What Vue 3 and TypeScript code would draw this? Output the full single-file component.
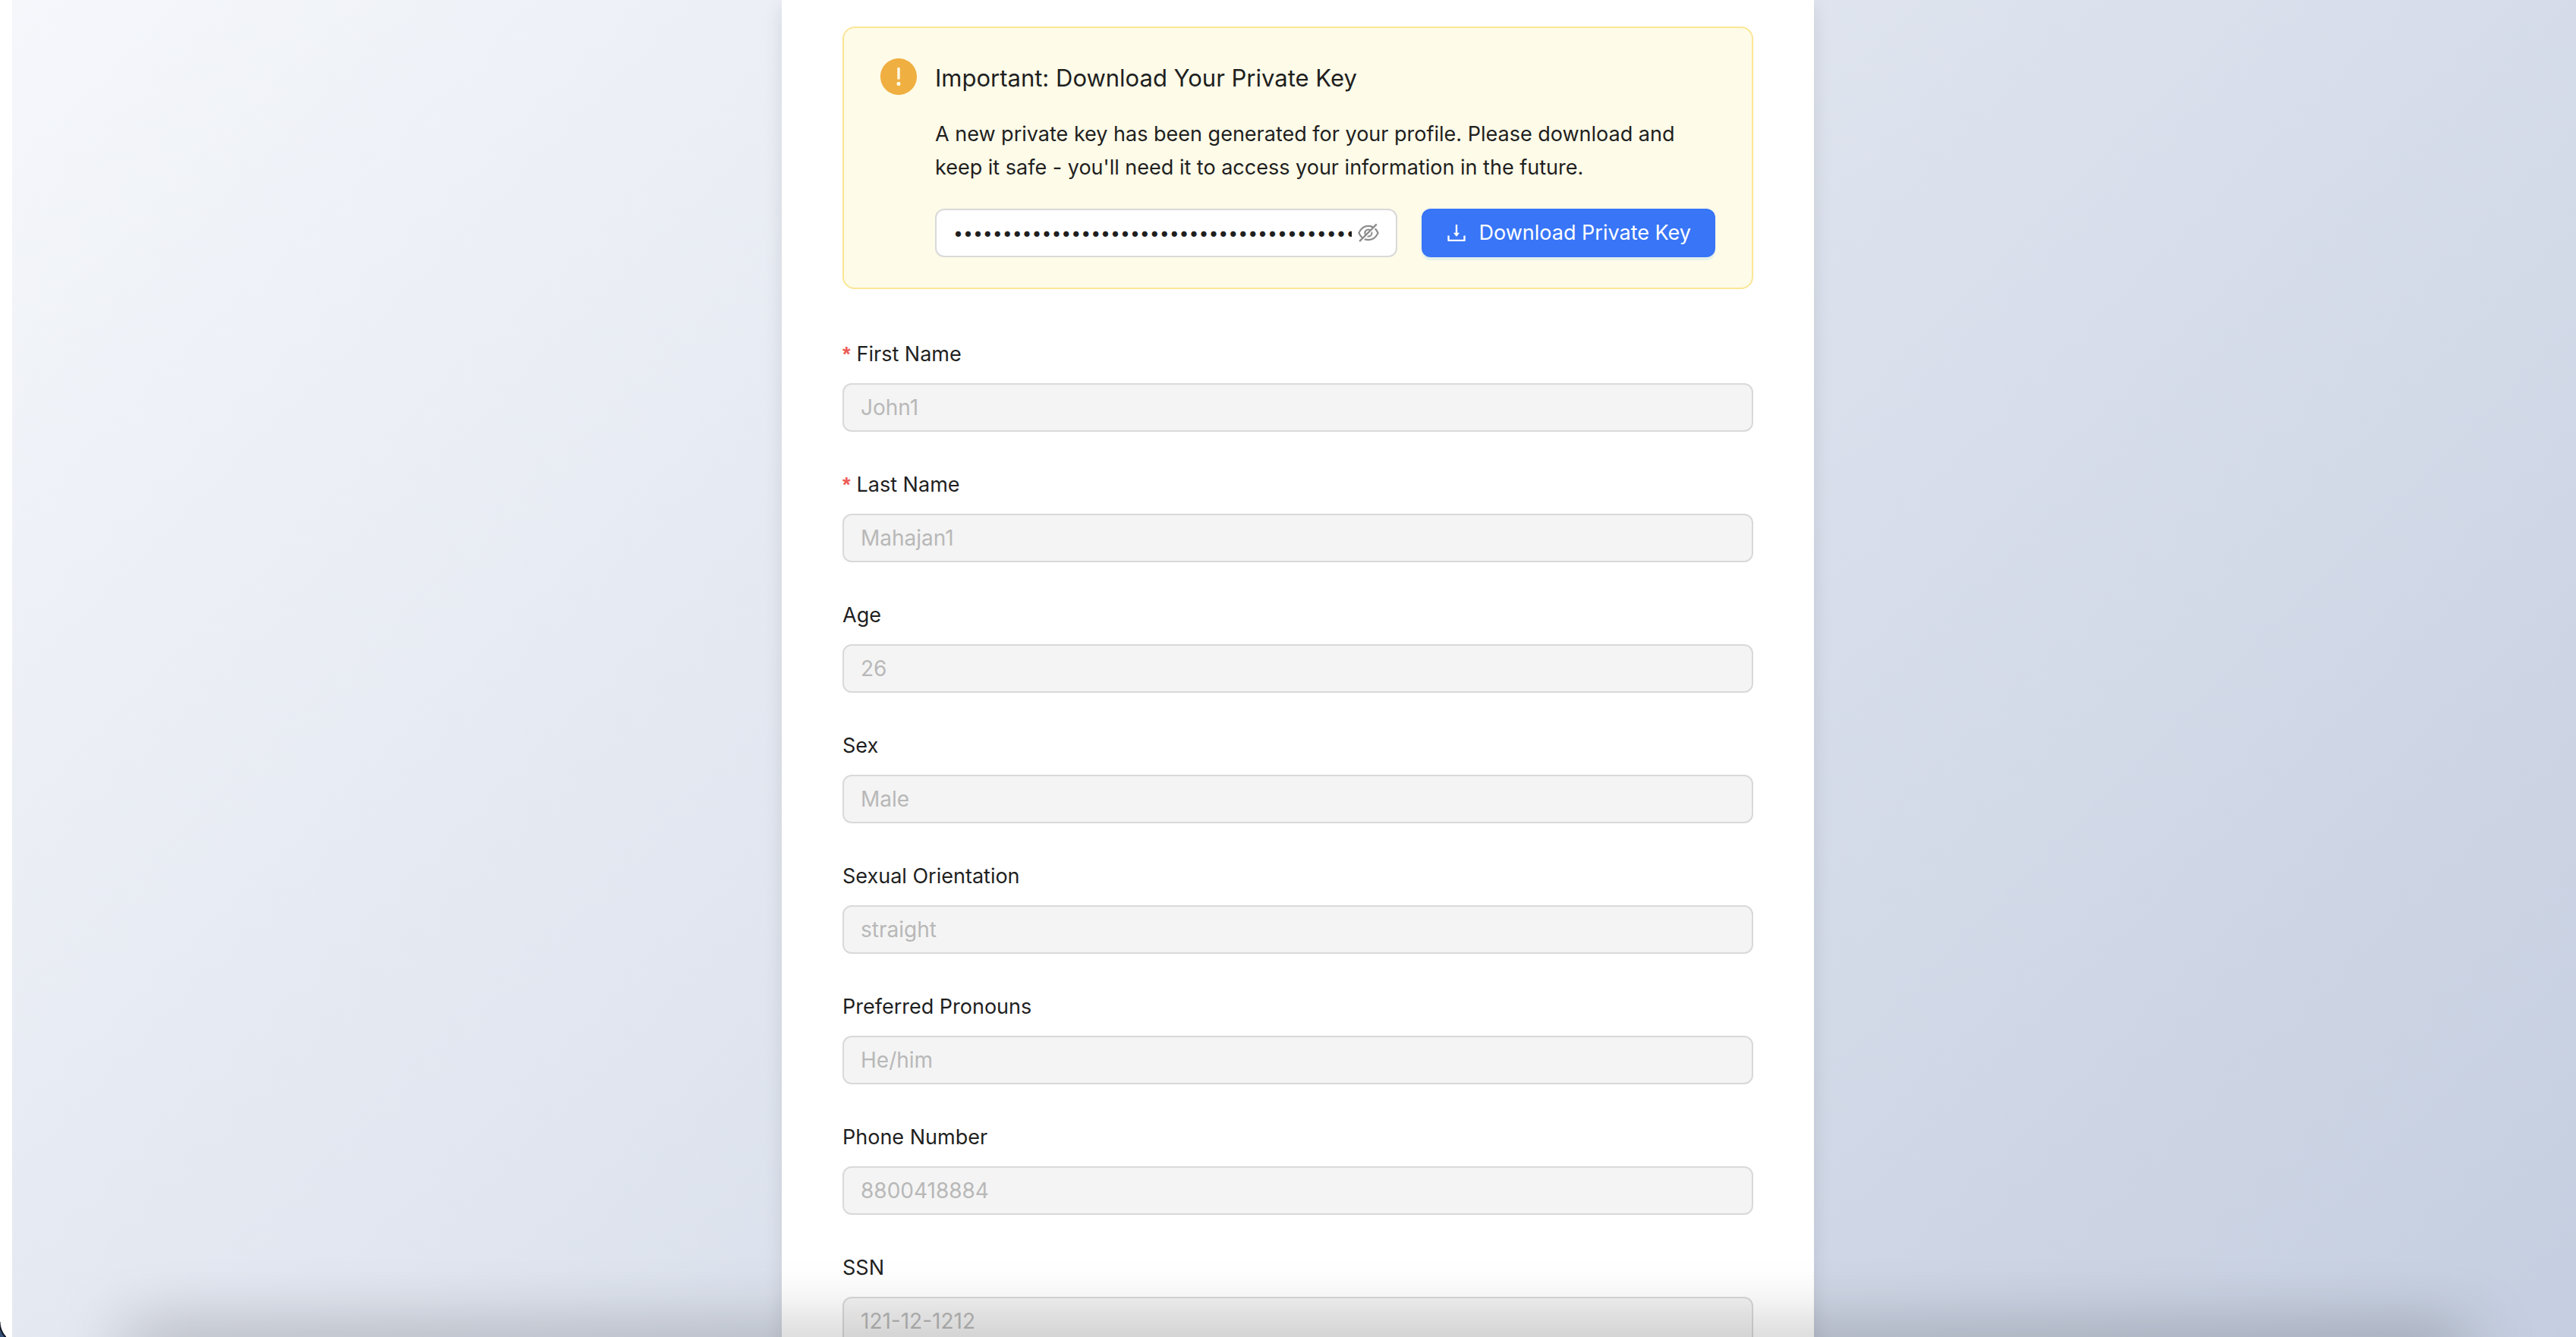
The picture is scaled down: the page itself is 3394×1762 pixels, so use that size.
<script setup lang="ts">
import { ref } from 'vue'

interface Field {
  id: string
  label: string
  value: string
  required?: boolean
}

const fields: Field[] = [
  { id: 'firstName', label: 'First Name', value: 'John1', required: true },
  { id: 'lastName', label: 'Last Name', value: 'Mahajan1', required: true },
  { id: 'age', label: 'Age', value: '26' },
  { id: 'sex', label: 'Sex', value: 'Male' },
  { id: 'orientation', label: 'Sexual Orientation', value: 'straight' },
  { id: 'pronouns', label: 'Preferred Pronouns', value: 'He/him' },
  { id: 'phone', label: 'Phone Number', value: '8800418884' },
  { id: 'ssn', label: 'SSN', value: '121-12-1212' },
]

const privateKey = ref('3f9c1a7e5b2d4860a1c3e5f7092b4d6e8f01a2b3c4d5e6f7')
const keyVisible = ref(false)
</script>

<template>
  <div class="window">
    <main class="page">
      <div class="card">
        <section class="alert" role="alert">
          <svg class="alert-icon" viewBox="64 64 896 896" aria-hidden="true">
            <path d="M512 64C264.6 64 64 264.6 64 512s200.6 448 448 448 448-200.6 448-448S759.4 64 512 64zm-32 232c0-4.4 3.6-8 8-8h48c4.4 0 8 3.6 8 8v272c0 4.4-3.6 8-8 8h-48c-4.4 0-8-3.6-8-8V296zm32 440a48.01 48.01 0 010-96 48.01 48.01 0 010 96z" />
          </svg>
          <div class="alert-body">
            <h2 class="alert-title">Important: Download Your Private Key</h2>
            <p class="alert-text">
              A new private key has been generated for your profile. Please download and
              keep it safe - you'll need it to access your information in the future.
            </p>
            <div class="key-row">
              <div class="key-box">
                <input
                  v-model="privateKey"
                  class="key-input"
                  :type="keyVisible ? 'text' : 'password'"
                  aria-label="Private key"
                  readonly
                />
                <button
                  class="eye"
                  type="button"
                  aria-label="Toggle key visibility"
                  @click="keyVisible = !keyVisible"
                >
                  <svg class="icon" viewBox="64 64 896 896" aria-hidden="true">
                    <path d="M942.2 486.2Q889.47 375.11 816.7 305l-50.88 50.88C807.31 395.53 843.45 447.4 874.7 512 791.5 684.2 673.4 766 512 766q-72.67 0-133.87-22.38L323 798.75Q408 838 512 838q288.3 0 430.2-300.3a60.29 60.29 0 000-51.5zm-63.57-320.64L836 122.88a8 8 0 00-11.32 0L715.31 232.2Q624.86 186 512 186q-288.3 0-430.2 300.3a60.3 60.3 0 000 51.5q56.69 119.4 136.5 191.41L112.48 835a8 8 0 000 11.31L155.17 889a8 8 0 0011.31 0l712.15-712.12a8 8 0 000-11.32zM149.3 512C232.6 339.8 350.7 258 512 258c54.54 0 104.13 9.36 149.12 28.39l-70.3 70.3a176 176 0 00-238.13 238.13l-83.42 83.42C223.1 637.49 183.3 582.28 149.3 512zm246.7 0a112.11 112.11 0 01146.2-106.69L401.31 546.2A112 112 0 01396 512z" />
                    <path d="M508 624c-3.46 0-6.87-.16-10.25-.47l-52.82 52.82a176.09 176.09 0 00227.42-227.42l-52.82 52.82c.31 3.38.47 6.79.47 10.25a111.94 111.94 0 01-112 112z" />
                  </svg>
                </button>
              </div>
              <button class="download" type="button">
                <svg class="icon" viewBox="64 64 896 896" aria-hidden="true">
                  <path d="M505.7 661a8 8 0 0012.6 0l112-141.7c4.1-5.2.4-12.9-6.3-12.9h-74.1V168c0-4.4-3.6-8-8-8h-60c-4.4 0-8 3.6-8 8v338.3H400c-6.7 0-10.4 7.7-6.3 12.9l112 141.8zM878 626h-60c-4.4 0-8 3.6-8 8v154H214V634c0-4.4-3.6-8-8-8h-60c-4.4 0-8 3.6-8 8v198c0 17.7 14.3 32 32 32h684c17.7 0 32-14.3 32-32V634c0-4.4-3.6-8-8-8z" />
                </svg>
                <span>Download Private Key</span>
              </button>
            </div>
          </div>
        </section>

        <form class="form" @submit.prevent>
          <div v-for="field in fields" :key="field.id" class="field">
            <label class="label" :for="field.id">
              <span v-if="field.required" class="star" aria-hidden="true">*</span>
              <span>{{ field.label }}</span>
            </label>
            <input :id="field.id" class="input" type="text" :value="field.value" disabled />
          </div>
        </form>
      </div>
    </main>
    <div class="bottom-shade"></div>
    <div class="window-corner"></div>
  </div>
</template>

<style>
body {
  margin: 0;
  background: #fff;
}
</style>

<style scoped>
.window {
  box-sizing: border-box;
  height: 100vh;
  padding-left: 16px;
  overflow: hidden;
  color: #1f1f1f;
  font-family: Inter, 'Liberation Sans', sans-serif;
  font-size: 27px;
  line-height: 44px;
}

.page {
  box-sizing: border-box;
  height: 100%;
  padding-left: 10px;
  background: linear-gradient(135deg, #f5f7fb 0%, #c5cee0 100%);
}

.card {
  box-sizing: border-box;
  max-width: 1360px;
  margin: 0 auto;
  padding: 35px 80px 80px;
  background: #fff;
  box-shadow: 0 8px 24px rgba(0, 0, 0, 0.1);
}

.alert {
  display: flex;
  gap: 24px;
  padding: 40px 48px;
  background: #fefbe8;
  border: 2px solid #fbe695;
  border-radius: 16px;
}

.alert-icon {
  flex: none;
  width: 48px;
  height: 48px;
  fill: #f0af41;
}

.alert-body {
  flex: 1;
  min-width: 0;
}

.alert-title {
  margin: 0 0 26px;
  font-size: 31px;
  font-weight: 400;
  line-height: 52px;
}

.alert-text {
  margin: 0 0 32px;
}

.key-row {
  display: flex;
  gap: 32px;
}

.key-box {
  display: flex;
  flex: 1;
  align-items: center;
  gap: 8px;
  box-sizing: border-box;
  min-width: 0;
  height: 64px;
  padding: 0 22px;
  background: #fff;
  border: 2px solid #d9d9d9;
  border-radius: 12px;
}

.key-input {
  flex: 1;
  min-width: 0;
  padding: 0;
  color: inherit;
  font: inherit;
  font-size: 23px;
  background: none;
  border: 0;
  outline: 0;
}

.eye {
  display: flex;
  padding: 0;
  color: #8c8c8c;
  background: none;
  border: 0;
}

.icon {
  flex: none;
  width: 28px;
  height: 28px;
  fill: currentColor;
}

.download {
  display: flex;
  flex: none;
  align-items: center;
  gap: 16px;
  height: 64px;
  padding: 0 32px;
  color: #fff;
  font: inherit;
  background: #3875f7;
  border: 0;
  border-radius: 12px;
  box-shadow: 0 4px 0 rgba(5, 145, 255, 0.1);
}

.form {
  display: flex;
  flex-direction: column;
  gap: 48px;
  margin-top: 64px;
}

.field {
  display: flex;
  flex-direction: column;
  gap: 16px;
}

.label {
  display: flex;
  gap: 8px;
}

.star {
  color: #ee5b55;
  font-family: 'Liberation Sans', sans-serif;
  font-weight: 700;
}

.input {
  box-sizing: border-box;
  width: 100%;
  height: 64px;
  padding: 0 22px;
  color: #b8b8b8;
  font: inherit;
  font-size: 28px;
  background: #f4f4f4;
  border: 2px solid #d9d9d9;
  border-radius: 12px;
}

/* Shadow cast upwards by whatever sits below the window edge */
.bottom-shade {
  position: fixed;
  right: 150px;
  bottom: -30px;
  left: 170px;
  height: 20px;
  border-radius: 20px;
  box-shadow: 0 0 90px 10px rgba(0, 0, 0, 0.4);
  pointer-events: none;
}

/* Desktop seen past the window's rounded corner */
.window-corner {
  position: fixed;
  bottom: 0;
  left: 0;
  width: 8px;
  height: 20px;
  background: radial-gradient(circle at 29px 0, transparent 28px, #0d1520 29px, #0d1520 30px, #35507a 31px);
}
</style>
